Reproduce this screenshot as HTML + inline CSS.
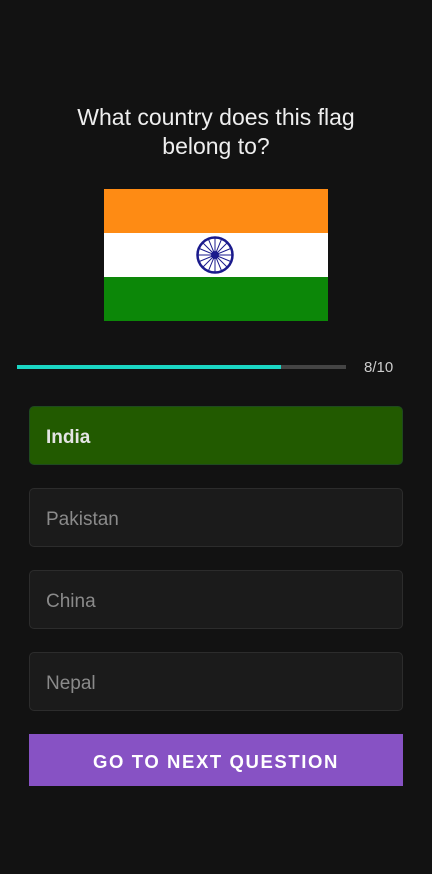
<!DOCTYPE html>
<html><head><style>
body{margin:0;width:432px;height:874px;background:#121212;font-family:"Liberation Sans",sans-serif;position:relative;overflow:hidden}
.q{position:absolute;top:103px;left:0;width:432px;text-align:center;color:#eee;font-size:23px;line-height:29px}
.opt{position:absolute;left:29px;height:57px;border:1px solid #2c2c2c;border-radius:5px;background:#1b1b1b;color:#8a8a8a;font-size:19px;line-height:61px;padding-left:16px;width:356px}
.btn{position:absolute;left:29px;top:734px;width:374px;height:52px;background:#8752c4;color:#fff;font-weight:bold;font-size:18.5px;letter-spacing:1.6px;text-align:center;line-height:56px}
</style></head><body>
<div class="q">What country does this flag<br>belong to?</div>
<svg style="position:absolute;left:104px;top:189px" width="224" height="132" viewBox="0 0 224 132">
<rect width="224" height="44" fill="#fe8b14"/><rect y="44" width="224" height="44" fill="#fff"/><rect y="88" width="224" height="44" fill="#0c8708"/>
<circle cx="111" cy="66" r="17.5" fill="none" stroke="#1a1a8c" stroke-width="2.5"/>
<g stroke="#1a1a8c" stroke-width="1">
<line x1="94" y1="66" x2="128" y2="66"/><line x1="111" y1="49" x2="111" y2="83"/>
<line x1="99" y1="54" x2="123" y2="78"/><line x1="123" y1="54" x2="99" y2="78"/>
<line x1="95.3" y1="59.5" x2="126.7" y2="72.5"/><line x1="95.3" y1="72.5" x2="126.7" y2="59.5"/>
<line x1="104.5" y1="50.3" x2="117.5" y2="81.7"/><line x1="117.5" y1="50.3" x2="104.5" y2="81.7"/>
</g>
<circle cx="111" cy="66" r="4" fill="#1a1a8c"/>
</svg>
<div style="position:absolute;left:17px;top:365px;width:329px;height:4px;background:#444"></div>
<div style="position:absolute;left:17px;top:365px;width:264px;height:4px;background:#1ad6c4"></div>
<div style="position:absolute;left:364px;top:359px;color:#ccc;font-size:15px">8/10</div>
<div class="opt" style="top:406px;background:#225a00;border-color:#1f4a1f;color:#e4e4e4;font-weight:bold">India</div>
<div class="opt" style="top:488px">Pakistan</div>
<div class="opt" style="top:570px">China</div>
<div class="opt" style="top:652px">Nepal</div>
<div class="btn">GO TO NEXT QUESTION</div>
</body></html>
